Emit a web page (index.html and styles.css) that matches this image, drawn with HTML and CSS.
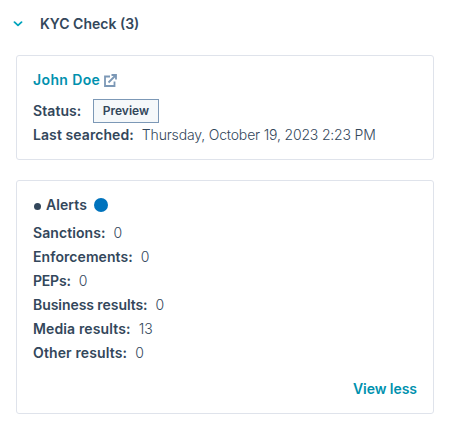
FILE: index.html
```html
<!DOCTYPE html>
<html lang="en">
  <head>
    <meta charset="UTF-8" />
    <meta name="viewport" content="width=device-width, initial-scale=1.0" />
    <title>KYC Check</title>
    <link rel="stylesheet" href="styles.css">
  </head>
  <body>
    <div class="panel">
      <div class="header">
        <svg class="chevron" width="10" height="6" viewBox="0 0 10 6">
          <path d="M1.5 1.2L5 4.4L8.5 1.2" />
        </svg>
        <h1 class="title">KYC Check (3)</h1>
      </div>

      <div class="card person">
        <a class="link name" href="#">
          <span>John Doe</span>
          <svg class="external" width="13" height="13" viewBox="0 0 13 13">
            <path d="M6 2.5H1V12H10.5V7.5" />
            <path d="M4.5 8.5L11.5 1.5M7.5 1H12V5.5" />
          </svg>
        </a>
        <div class="row status">
          <span class="label">Status:</span>
          <span class="tag">Preview</span>
        </div>
        <div class="row">
          <span class="label">Last searched:</span>
          <span class="value date">Thursday, October 19, 2023 2:23 PM</span>
        </div>
      </div>

      <div class="card alerts">
        <div class="row heading">
          <span class="bullet"></span>
          <span class="label">Alerts</span>
          <span class="dot"></span>
        </div>
        <div class="row"><span class="label">Sanctions:</span><span class="value">0</span></div>
        <div class="row"><span class="label">Enforcements:</span><span class="value">0</span></div>
        <div class="row"><span class="label peps">PEPs:</span><span class="value">0</span></div>
        <div class="row"><span class="label business">Business results:</span><span class="value">0</span></div>
        <div class="row"><span class="label results">Media results:</span><span class="value">13</span></div>
        <div class="row"><span class="label results">Other results:</span><span class="value">0</span></div>
        <a class="link more" href="#">View less</a>
      </div>
    </div>
  </body>
</html>
```

FILE: styles.css
```css
* {
  box-sizing: border-box;
}
body {
  margin: 0;
  background: #fff;
  color: #33475b;
  font-family: Inter, "Liberation Sans", sans-serif;
  font-size: 14px;
  line-height: 24px;
}
.panel {
  width: 434px;
  padding: 12px 0 0 16px;
}
.header {
  display: flex;
  align-items: center;
  height: 24px;
  margin: 0 0 19px -3px;
}
.chevron {
  margin-right: 17px;
  fill: none;
  stroke: #00a4bd;
  stroke-width: 1.8;
  stroke-linecap: round;
  stroke-linejoin: round;
}
.title {
  margin: 0;
  font-size: 14px;
  font-weight: 600;
}
.card {
  display: flex;
  flex-direction: column;
  padding: 12px 16px;
  border: 1px solid #dfe3eb;
  border-radius: 3px;
}
.person {
  height: 105px;
  margin-bottom: 20px;
}
.alerts {
  height: 234px;
}
.link {
  color: #0091ae;
  font-weight: 600;
  text-decoration: none;
}
.name {
  display: flex;
  align-items: center;
  gap: 4px;
  height: 24px;
  letter-spacing: 0.38px;
}
.external {
  fill: none;
  stroke: #7c98b6;
  stroke-width: 1.8;
}
.row {
  display: flex;
  align-items: center;
  height: 24px;
  white-space: nowrap;
}
.status {
  margin-top: 7px;
}
.label {
  font-weight: 600;
  letter-spacing: 0.08px;
}
.peps {
  letter-spacing: -0.2px;
}
.business {
  letter-spacing: -0.06px;
}
.results {
  letter-spacing: 0.13px;
}
.value {
  margin-left: 8px;
  font-weight: 300;
}
.date {
  letter-spacing: -0.17px;
}
.tag {
  width: 66px;
  height: 24px;
  margin-left: 11.5px;
  border: 1px solid #7c98b6;
  background: #f5f8fa;
  font-size: 12px;
  font-weight: 600;
  line-height: 22px;
  text-align: center;
}
.heading {
  margin-bottom: 4px;
}
.bullet {
  width: 7px;
  height: 7px;
  margin: 2px 5px 0 1px;
  border-radius: 50%;
  background: #33475b;
}
.dot {
  width: 14px;
  height: 14px;
  margin-left: 7px;
  border-radius: 50%;
  background: #0073bd;
}
.more {
  align-self: flex-end;
  margin-top: 12px;
  letter-spacing: -0.05px;
}
```
